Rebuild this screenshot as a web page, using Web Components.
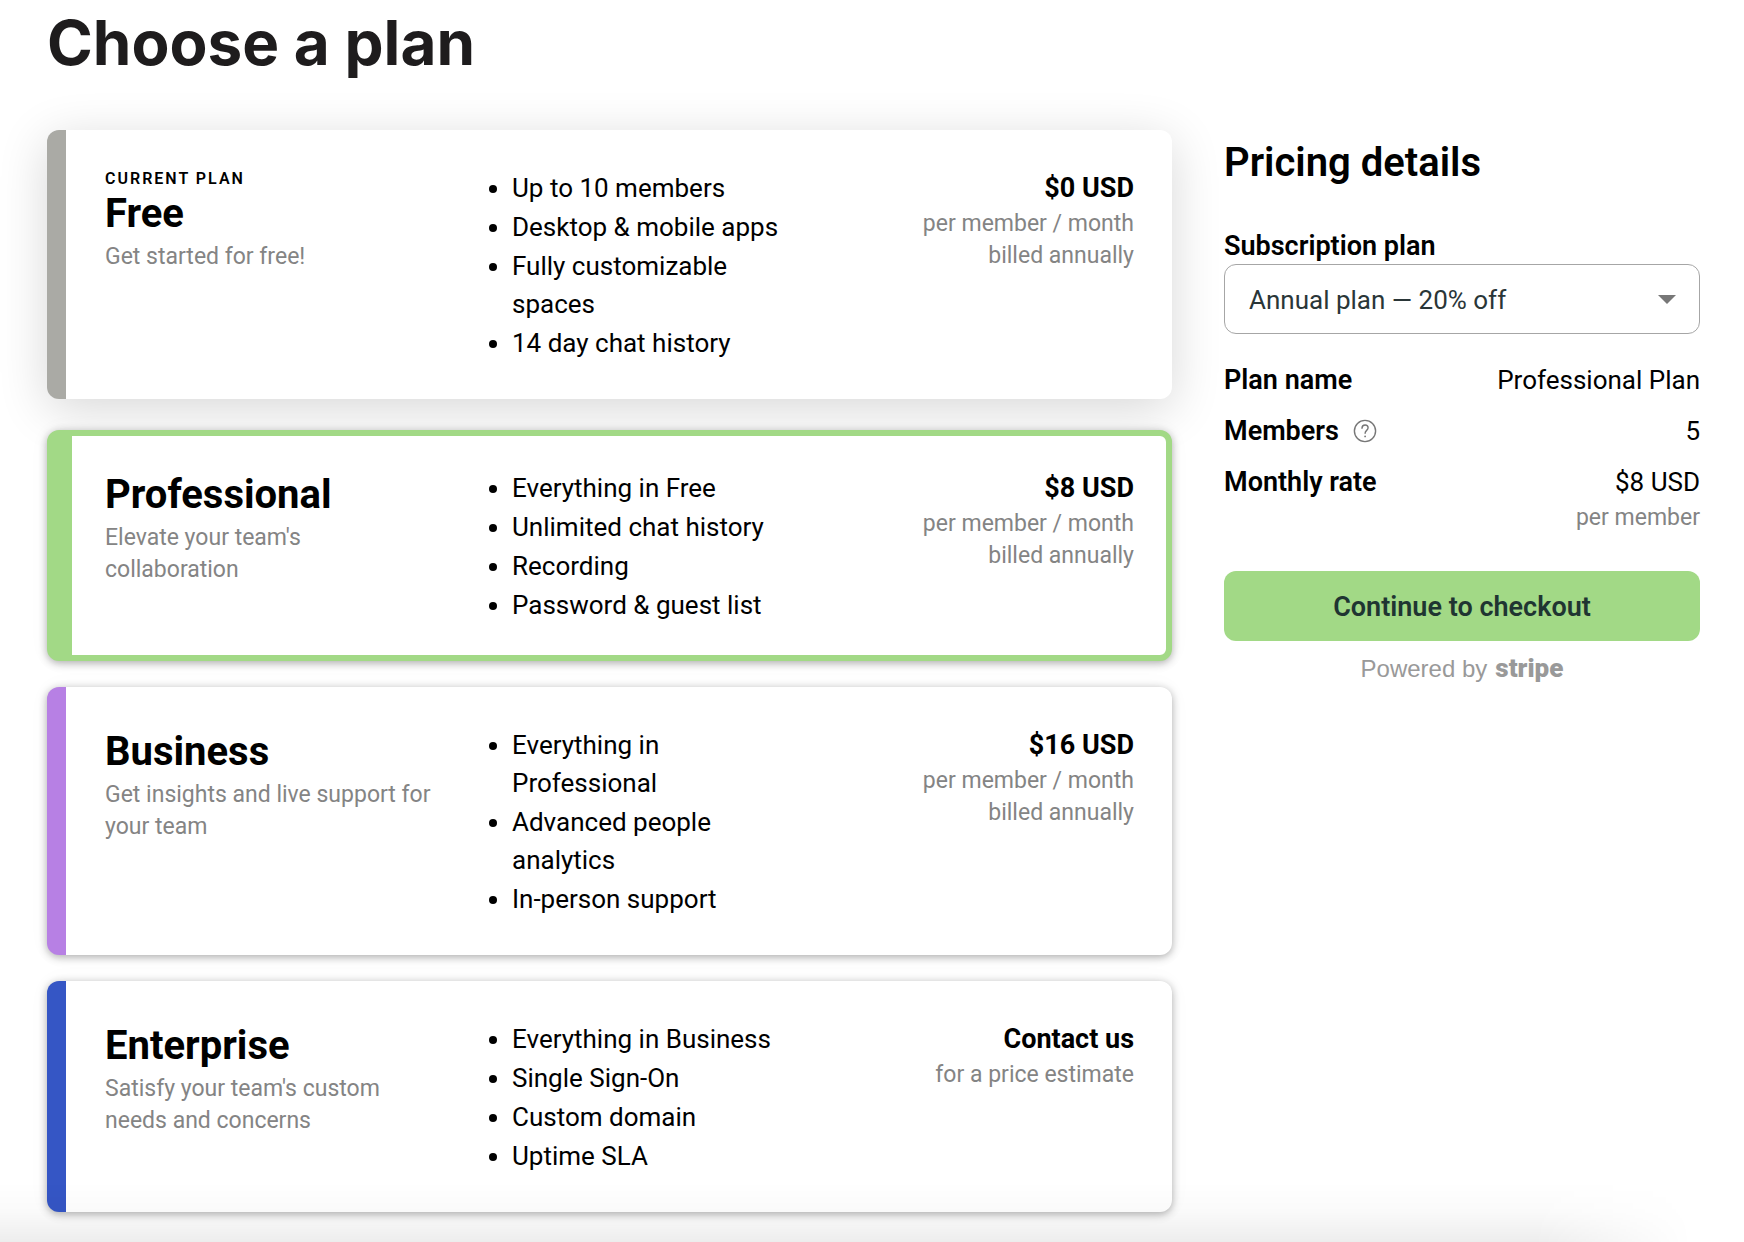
<!DOCTYPE html>
<html lang="en">
<head>
<meta charset="utf-8">
<meta name="viewport" content="width=device-width, initial-scale=1">
<title>Choose a plan</title>
<style>
  body { margin: 0; background: #fff; color: #000; font-family: Roboto, "Liberation Sans", sans-serif; font-size: 26px; line-height: 38px; }
  plan-card li + li { margin-top: 1px; }
</style>
</head>
<body>
<plan-page>
  <span slot="title">Choose a plan</span>

  <plan-card color="#aaaaa5" current>
    <span slot="eyebrow">Current plan</span>
    <span slot="name">Free</span>
    <span slot="about">Get started for free!</span>
    <ul slot="features">
      <li>Up to 10 members</li>
      <li>Desktop &amp; mobile apps</li>
      <li>Fully customizable spaces</li>
      <li>14 day chat history</li>
    </ul>
    <span slot="price">$0 USD</span>
    <span slot="terms">per member / month<br>billed annually</span>
  </plan-card>

  <plan-card color="#a2d986" selected>
    <span slot="name">Professional</span>
    <span slot="about">Elevate your team's collaboration</span>
    <ul slot="features">
      <li>Everything in Free</li>
      <li>Unlimited chat history</li>
      <li>Recording</li>
      <li>Password &amp; guest list</li>
    </ul>
    <span slot="price">$8 USD</span>
    <span slot="terms">per member / month<br>billed annually</span>
  </plan-card>

  <plan-card color="#b780e4">
    <span slot="name">Business</span>
    <span slot="about">Get insights and live support for your team</span>
    <ul slot="features">
      <li>Everything in Professional</li>
      <li>Advanced people analytics</li>
      <li>In-person support</li>
    </ul>
    <span slot="price">$16 USD</span>
    <span slot="terms">per member / month<br>billed annually</span>
  </plan-card>

  <plan-card color="#3556c5">
    <span slot="name">Enterprise</span>
    <span slot="about">Satisfy your team's custom needs and concerns</span>
    <ul slot="features">
      <li>Everything in Business</li>
      <li>Single Sign-On</li>
      <li>Custom domain</li>
      <li>Uptime SLA</li>
    </ul>
    <span slot="price">Contact us</span>
    <span slot="terms">for a price estimate</span>
  </plan-card>

  <pricing-details slot="details">
    <detail-row>
      <span slot="label">Plan name</span>
      <span>Professional Plan</span>
    </detail-row>
    <detail-row>
      <span slot="label">Members</span>
      <help-button slot="hint"></help-button>
      <span>5</span>
    </detail-row>
    <detail-row>
      <span slot="label">Monthly rate</span>
      <span>$8 USD</span>
      <span slot="note">per member</span>
    </detail-row>
  </pricing-details>
</plan-page>

<script>
  class BaseElement extends HTMLElement {
    constructor() {
      super();
      this.attachShadow({ mode: "open" }).innerHTML = this.constructor.markup;
    }
  }

  customElements.define("plan-page", class extends BaseElement {
    static markup = `
      <style>
        :host { display: block; min-height: 100vh; box-sizing: border-box; padding: 7px 44px 24px 47px; }
        h1 { margin: 0 0 51px; font: 700 62px/72px Inter, "Liberation Sans", sans-serif; color: #1e1c1d; }
        .columns { display: grid; grid-template-columns: minmax(0, 1fr) 476px; gap: 52px; align-items: start; }
        .plans { display: flex; flex-direction: column; gap: 26px; }
        .fade { position: fixed; left: 0; right: 0; bottom: 0; height: 60px; pointer-events: none;
          background: linear-gradient(to bottom, transparent, rgba(0, 0, 0, .02) 50%, rgba(0, 0, 0, .07));
          -webkit-mask: linear-gradient(to right, #000 88%, transparent 97%); mask: linear-gradient(to right, #000 88%, transparent 97%); }
      </style>
      <h1><slot name="title"></slot></h1>
      <main class="columns">
        <div class="plans"><slot></slot></div>
        <slot name="details"></slot>
      </main>
      <div class="fade"></div>`;
  });

  customElements.define("plan-card", class extends BaseElement {
    static markup = `
      <style>
        :host { display: grid; grid-template-columns: repeat(3, minmax(0, 1fr)); box-sizing: border-box;
          padding: 39px 38px 37px 39px; background: #fff; border-left: 19px solid var(--accent); border-radius: 12px;
          box-shadow: 0 2px 9px rgba(0, 0, 0, .32), 0 0 24px rgba(0, 0, 0, .03); }
        :host([current]) { box-shadow: 0 10px 50px rgba(0, 0, 0, .16); margin-bottom: 5px; }
        :host([selected]) { border: 6px solid var(--accent); border-left-width: 25px; padding: 33px 32px 31px 33px; }
        .intro { padding-right: 12px; }
        h2 { margin: 0; font-size: 40px; line-height: 52px; font-weight: 700; }
        slot[name="eyebrow"] { display: block; font-size: 16px; line-height: 19px; font-weight: 600; letter-spacing: 2px; text-transform: uppercase; }
        :host(:not([current])) slot[name="eyebrow"] { display: none; }
        .small { margin: 0; padding-top: 1px; font-size: 23px; line-height: 32px; color: #848484; }
        ::slotted(ul) { margin: 0; padding: 0 0 0 64px; }
        .price { text-align: right; }
        strong { display: block; font-size: 27px; font-weight: 700; }
      </style>
      <div class="intro">
        <slot name="eyebrow"></slot>
        <h2><slot name="name"></slot></h2>
        <p class="small"><slot name="about"></slot></p>
      </div>
      <slot name="features"></slot>
      <div class="price">
        <strong><slot name="price"></slot></strong>
        <p class="small"><slot name="terms"></slot></p>
      </div>`;
    connectedCallback() {
      this.style.setProperty("--accent", this.getAttribute("color"));
    }
  });

  customElements.define("detail-row", class extends BaseElement {
    static markup = `
      <style>
        :host { display: flex; justify-content: space-between; }
        .label { display: flex; align-items: center; gap: 14px; height: 38px; font-size: 27px; font-weight: 600; }
        .value { text-align: right; }
        slot[name="note"] { display: block; font-size: 23px; line-height: 34px; color: #848484; }
      </style>
      <div class="label"><slot name="label"></slot><slot name="hint"></slot></div>
      <div class="value"><slot></slot><slot name="note"></slot></div>`;
  });

  customElements.define("help-button", class extends BaseElement {
    static markup = `
      <style>
        :host { display: inline-flex; }
        button { display: flex; padding: 0; border: 0; background: none; color: #777; cursor: pointer; }
      </style>
      <button type="button" aria-label="About members">
        <svg width="24" height="24" viewBox="0 0 24 24" fill="none" stroke="currentColor" stroke-width="1.4" stroke-linecap="round">
          <circle cx="12" cy="12" r="10.6"/>
          <path d="M9 9.2C9 7.2 10.3 6 12.1 6c1.8 0 3 1.1 3 2.8 0 2.5-3 2.7-3 5.4"/>
          <circle cx="12.1" cy="17.4" r=".9" fill="currentColor" stroke="none"/>
        </svg>
      </button>`;
  });

  customElements.define("pricing-details", class extends BaseElement {
    static markup = `
      <style>
        :host { display: block; padding-top: 7px; }
        h2 { margin: 0 0 39px; font-size: 40px; line-height: 52px; font-weight: 600; }
        label { display: block; font-size: 27px; line-height: 36px; font-weight: 600; }
        .select { display: grid; align-items: center; margin-bottom: 27px; }
        .select > * { grid-area: 1 / 1; }
        select { appearance: none; box-sizing: border-box; width: 100%; height: 70px; margin: 0; padding: 2px 56px 0 24px;
          font: inherit; color: #2a3638; background: #fff; border: 1px solid #a6a6a6; border-radius: 12px; }
        .select svg { justify-self: end; margin-right: 24px; pointer-events: none; }
        .rows { display: flex; flex-direction: column; gap: 13px; }
        .checkout { display: block; width: 100%; height: 70px; margin: 36px 0 8px; padding: 2px 0 0; border: 0; border-radius: 12px;
          background: #a2d986; color: #1f3532; font: inherit; font-size: 27px; font-weight: 600; cursor: pointer; }
        .powered { display: flex; justify-content: center; align-items: baseline; gap: 8px; margin: 0; color: #999;
          font-family: "Liberation Sans", sans-serif; font-size: 24px; }
        .powered b { font-family: Roboto, "Liberation Sans", sans-serif; font-size: 26px; font-weight: 900; }
      </style>
      <h2>Pricing details</h2>
      <label for="plan">Subscription plan</label>
      <div class="select">
        <select id="plan">
          <option>Annual plan — 20% off</option>
          <option>Monthly plan</option>
        </select>
        <svg width="18" height="9" viewBox="0 0 18 9"><path d="M0 0h18L9 9z" fill="#777"/></svg>
      </div>
      <div class="rows"><slot></slot></div>
      <button class="checkout" type="button">Continue to checkout</button>
      <p class="powered"><span>Powered by</span><b>stripe</b></p>`;
  });
</script>
</body>
</html>
